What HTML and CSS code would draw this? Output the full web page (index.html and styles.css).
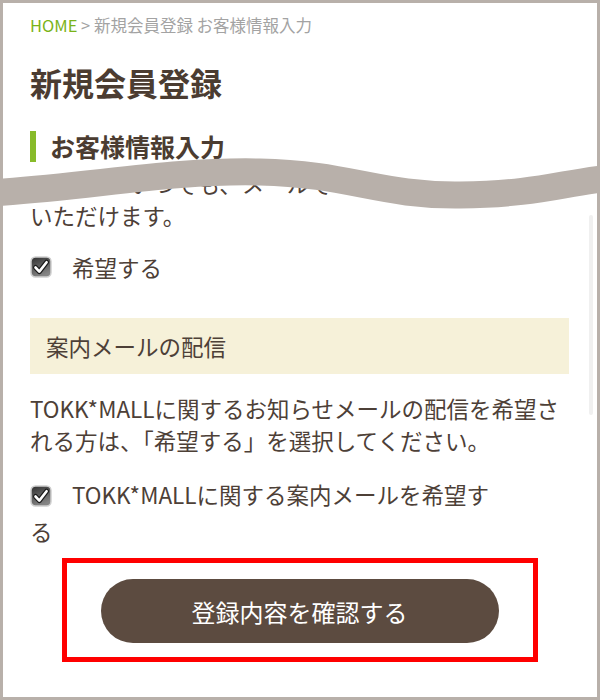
FILE: index.html
```html
<!DOCTYPE html>
<html lang="ja">
<head>
    <meta charset="UTF-8">
    <meta name="viewport" content="width=device-width, initial-scale=1.0">
    <title>新規会員登録 | TOKK*MALL</title>
    <link rel="stylesheet" href="styles.css">
</head>
<body>
    <div class="screen">
        <p class="breadcrumb"><a href="#">HOME</a> &gt; 新規会員登録 お客様情報入力</p>

        <h1 class="page-title">新規会員登録</h1>
        <h2 class="section-title">お客様情報入力</h2>

        <p class="text text--cut">いつでも、メールで<br>いただけます。</p>

        <label class="check-row">
            <svg class="check" viewBox="0 0 22 22" width="22" height="22">
                <defs>
                    <linearGradient id="cbFill" x1="0" y1="0" x2="0.4" y2="1">
                        <stop offset="0" stop-color="#2f2f2f"/>
                        <stop offset="1" stop-color="#858585"/>
                    </linearGradient>
                </defs>
                <rect x="1" y="1" width="20" height="20" rx="4.5" fill="url(#cbFill)" stroke="#cfcfcf" stroke-width="1.5"/>
                <path d="M5.5 11.5 L9.3 15.6 L16.6 6.2" fill="none" stroke="#1a1a1a" stroke-width="5" stroke-linecap="round" stroke-linejoin="round"/>
                <path d="M5.5 11.5 L9.3 15.6 L16.6 6.2" fill="none" stroke="#fff" stroke-width="2.6" stroke-linecap="round" stroke-linejoin="round"/>
            </svg>
            <span>希望する</span>
        </label>

        <div class="form-head">案内メールの配信</div>

        <p class="text">TOKK*MALLに関するお知らせメールの配信を希望される方は、「希望する」を選択してください。</p>

        <label class="check-row check-row--wrap">
            <svg class="check" viewBox="0 0 22 22" width="22" height="22">
                <rect x="1" y="1" width="20" height="20" rx="4.5" fill="url(#cbFill)" stroke="#cfcfcf" stroke-width="1.5"/>
                <path d="M5.5 11.5 L9.3 15.6 L16.6 6.2" fill="none" stroke="#1a1a1a" stroke-width="5" stroke-linecap="round" stroke-linejoin="round"/>
                <path d="M5.5 11.5 L9.3 15.6 L16.6 6.2" fill="none" stroke="#fff" stroke-width="2.6" stroke-linecap="round" stroke-linejoin="round"/>
            </svg>TOKK*MALLに関する案内メールを希望する
        </label>

        <div class="highlight">
            <button type="submit" class="btn-confirm">登録内容を確認する</button>
        </div>

        <!-- torn edge between the heading and the rest of the form -->
        <svg class="tear" viewBox="0 0 600 60" width="600" height="60" preserveAspectRatio="none">
            <path d="M-10 40 C 90 34, 170 17, 260 19 S 380 43, 460 42 S 560 30, 610 25" fill="none" stroke="#b8b0aa" stroke-width="27"/>
        </svg>

        <div class="scrollbar"></div>
    </div>
</body>
</html>
```

FILE: styles.css
```css
body {
    margin: 0;
    font-family: "Noto Sans CJK JP", "Noto Sans", sans-serif;
    color: #4d4037;
    background: #fff;
}
.screen {
    position: relative;
    box-sizing: border-box;
    width: 600px;
    height: 700px;
    padding: 10px 28px 0 27px;
    border: 3px solid #b8b0aa;
    overflow: hidden;
}
.breadcrumb {
    margin: 0;
    font-size: 16.5px;
    line-height: 24px;
    color: #a3a3a3;
}
.breadcrumb a {
    color: #7ab317;
    text-decoration: none;
}
.page-title {
    margin: 25px 0 0;
    font-size: 32px;
    line-height: 40px;
    font-weight: bold;
    color: #4b3c31;
}
.section-title {
    margin: 29px 0 0;
    padding-left: 14px;
    border-left: 6px solid #88bb2a;
    font-size: 25px;
    line-height: 31px;
    font-weight: bold;
    color: #4b3c31;
}
.text {
    margin: 5px 0 0;
    font-size: 22.5px;
    line-height: 32px;
}
/* paragraph running on from the part of the form that is cut away */
.text--cut {
    text-indent: 100px;
}
.text + .check-row {
    margin-top: 20px;
}
.check-row {
    display: flex;
    align-items: center;
    gap: 20px;
    font-size: 22.5px;
    line-height: 32px;
}
.check {
    flex: none;
}
.form-head {
    margin-top: 35px;
    padding: 0 16px;
    height: 56px;
    line-height: 56px;
    font-size: 22.5px;
    background: #f6f1d9;
}
.form-head + .text {
    margin-top: 18px;
}
.check-row--wrap {
    display: block;
    margin-top: 8px;
    padding-right: 60px;
    line-height: 37px;
}
.check-row--wrap .check {
    vertical-align: -3px;
    margin-right: 20px;
}
.highlight {
    width: 466px;
    margin: 8px auto 0;
    padding: 16px 0 14px;
    border: 5px solid #ff0000;
}
.btn-confirm {
    display: block;
    width: 398px;
    height: 64px;
    margin: 0 auto;
    border: none;
    border-radius: 32px;
    background: #5c4b40;
    color: #fff;
    font-family: inherit;
    font-size: 24px;
    cursor: pointer;
}
.tear {
    position: absolute;
    left: -3px;
    top: 150px;
}
.scrollbar {
    position: absolute;
    right: 4px;
    top: 212px;
    width: 4px;
    height: 200px;
    border-radius: 2px;
    background: #f0f0f0;
}
```
